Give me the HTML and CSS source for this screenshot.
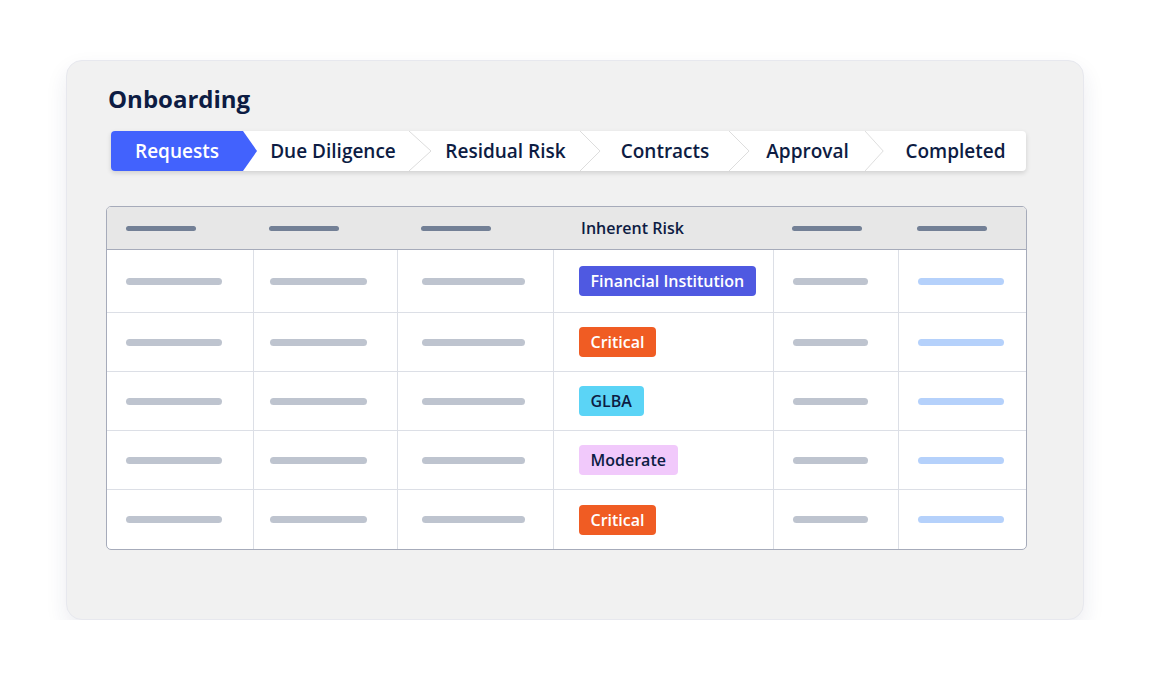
FILE: index.html
```html
<!DOCTYPE html>
<html lang="en">
<head>
    <meta charset="UTF-8">
    <meta name="viewport" content="width=device-width, initial-scale=1.0">
    <title>Onboarding</title>
    <link rel="stylesheet" href="styles.css">
</head>
<body>
    <div class="card">
        <h1>Onboarding</h1>

        <div class="stepper">
            <div class="step active">Requests</div>
            <div class="step">Due Diligence</div>
            <svg class="chevron" viewBox="0 0 22 40" preserveAspectRatio="none"><polyline points="0,0 22,20 0,40" /></svg>
            <div class="step">Residual Risk</div>
            <svg class="chevron" viewBox="0 0 22 40" preserveAspectRatio="none"><polyline points="0,0 21,20 0,40" /></svg>
            <div class="step">Contracts</div>
            <svg class="chevron" viewBox="0 0 22 40" preserveAspectRatio="none"><polyline points="0,0 21,20 0,40" /></svg>
            <div class="step">Approval</div>
            <svg class="chevron" viewBox="0 0 22 40" preserveAspectRatio="none"><polyline points="0,0 20,20 0,40" /></svg>
            <div class="step">Completed</div>
        </div>

        <div class="table-wrap">
            <table class="grid">
                <colgroup>
                    <col style="width:146px">
                    <col style="width:144px">
                    <col style="width:156px">
                    <col style="width:220px">
                    <col style="width:125px">
                    <col style="width:128px">
                </colgroup>
                <thead>
                    <tr>
                        <th><span class="hbar"></span></th>
                        <th><span class="hbar"></span></th>
                        <th><span class="hbar"></span></th>
                        <th>Inherent Risk</th>
                        <th><span class="hbar"></span></th>
                        <th><span class="hbar"></span></th>
                    </tr>
                </thead>
                <tbody>
                    <tr>
                        <td><span class="bar w1"></span></td>
                        <td><span class="bar w2"></span></td>
                        <td><span class="bar w3"></span></td>
                        <td><span class="badge financial">Financial Institution</span></td>
                        <td><span class="bar w5"></span></td>
                        <td><span class="bar blue"></span></td>
                    </tr>
                    <tr>
                        <td><span class="bar w1"></span></td>
                        <td><span class="bar w2"></span></td>
                        <td><span class="bar w3"></span></td>
                        <td><span class="badge critical">Critical</span></td>
                        <td><span class="bar w5"></span></td>
                        <td><span class="bar blue"></span></td>
                    </tr>
                    <tr>
                        <td><span class="bar w1"></span></td>
                        <td><span class="bar w2"></span></td>
                        <td><span class="bar w3"></span></td>
                        <td><span class="badge glba">GLBA</span></td>
                        <td><span class="bar w5"></span></td>
                        <td><span class="bar blue"></span></td>
                    </tr>
                    <tr>
                        <td><span class="bar w1"></span></td>
                        <td><span class="bar w2"></span></td>
                        <td><span class="bar w3"></span></td>
                        <td><span class="badge moderate">Moderate</span></td>
                        <td><span class="bar w5"></span></td>
                        <td><span class="bar blue"></span></td>
                    </tr>
                    <tr>
                        <td><span class="bar w1"></span></td>
                        <td><span class="bar w2"></span></td>
                        <td><span class="bar w3"></span></td>
                        <td><span class="badge critical">Critical</span></td>
                        <td><span class="bar w5"></span></td>
                        <td><span class="bar blue"></span></td>
                    </tr>
                </tbody>
            </table>
        </div>
    </div>
</body>
</html>
```

FILE: styles.css
```css
body {
    font-family: 'Open Sans', sans-serif;
    background-color: #fff;
    margin: 0;
    padding: 60px 0 0 66px;
    color: #0d1c43;
}
.card {
    width: 1018px;
    height: 560px;
    box-sizing: border-box;
    background-color: #f1f1f1;
    border: 1px solid #e7e8ee;
    border-radius: 16px;
    box-shadow: 0 10px 22px rgba(30, 40, 90, 0.09);
    padding: 21px 56px 0 39px;
}
h1 {
    margin: 0 0 16px 2px;
    font-size: 24px;
    line-height: 33px;
    font-weight: 700;
    color: #0d1c43;
}
.stepper {
    display: grid;
    grid-template-columns: 146px 152px 22px 149px 21px 128px 21px 115px 20px 141px;
    width: 915px;
    height: 40px;
    margin-left: 5px;
    background-color: #fff;
    border-radius: 4px;
    box-shadow: 0 2px 5px rgba(0, 0, 0, 0.14);
}
.step {
    display: flex;
    align-items: center;
    justify-content: center;
    font-size: 19px;
    font-weight: 600;
    white-space: nowrap;
}
.step.active {
    background-color: #4262fd;
    color: #fff;
    border-radius: 4px 0 0 4px;
    clip-path: polygon(0 0, 132px 0, 146px 50%, 132px 100%, 0 100%);
    padding-right: 14px;
}
.chevron {
    width: 100%;
    height: 40px;
}
.chevron polyline {
    fill: none;
    stroke: #dcdcdc;
    stroke-width: 1;
}
.table-wrap {
    margin-top: 35px;
    width: 921px;
    box-sizing: border-box;
    border: 1px solid #a6abba;
    border-radius: 5px;
    overflow: hidden;
    background-color: #fff;
}
.grid {
    width: 100%;
    border-collapse: collapse;
    table-layout: fixed;
}
.grid th {
    height: 42px;
    background-color: #e7e7e7;
    border-bottom: 1px solid #a6abba;
    text-align: left;
    padding: 0 0 0 19px;
    font-size: 16px;
    font-weight: 600;
    color: #0d1c43;
}
.grid td {
    height: 58px;
    padding: 0 0 0 19px;
    border-right: 1px solid #dcdfe6;
    border-bottom: 1px solid #dcdfe6;
}
.grid tbody tr:first-child td {
    height: 62px;
}
.grid tbody tr:last-child td {
    height: 59px;
    border-bottom: none;
}
.grid td:last-child {
    border-right: none;
}
.grid th:nth-child(2),
.grid td:nth-child(2) {
    padding-left: 16px;
}
.grid th:nth-child(3),
.grid td:nth-child(3) {
    padding-left: 24px;
}
.grid th:nth-child(4) {
    padding-left: 28px;
}
.grid td:nth-child(4) {
    padding-left: 25px;
}
.hbar {
    display: block;
    width: 70px;
    height: 5px;
    border-radius: 3px;
    background-color: #738096;
}
.bar {
    display: block;
    height: 7px;
    border-radius: 4px;
    background-color: #bec4cf;
}
.bar.w1 { width: 96px; }
.bar.w2 { width: 97px; }
.bar.w3 { width: 103px; }
.bar.w5 { width: 75px; }
.bar.blue {
    width: 86px;
    background-color: #b5d1fb;
}
.badge {
    display: inline-block;
    height: 30px;
    line-height: 30px;
    padding: 0 12px;
    border-radius: 4px;
    font-size: 16px;
    font-weight: 600;
}
.financial {
    background-color: #4f59e1;
    color: #fff;
}
.critical {
    background-color: #f05c23;
    color: #fff;
}
.glba {
    background-color: #5bd4f6;
    color: #0d1c43;
}
.moderate {
    background-color: #f1c9fb;
    color: #0d1c43;
}
```
